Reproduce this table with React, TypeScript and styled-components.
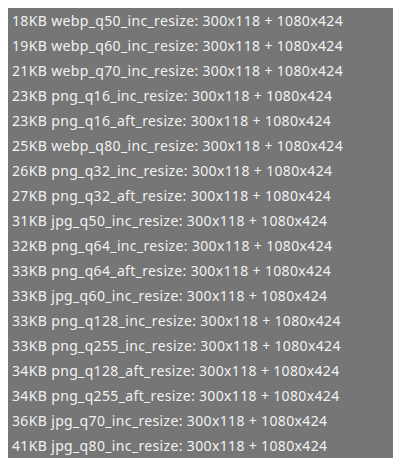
import React from 'react';
import styled, { createGlobalStyle } from 'styled-components';

const GlobalStyle = createGlobalStyle`
	body {
		margin: 8px;
		background: #ffffff;
	}
`;

const rows: string[] = [
	'18KB webp_q50_inc_resize',
	'19KB webp_q60_inc_resize',
	'21KB webp_q70_inc_resize',
	'23KB png_q16_inc_resize',
	'23KB png_q16_aft_resize',
	'25KB webp_q80_inc_resize',
	'26KB png_q32_inc_resize',
	'27KB png_q32_aft_resize',
	'31KB jpg_q50_inc_resize',
	'32KB png_q64_inc_resize',
	'33KB png_q64_aft_resize',
	'33KB jpg_q60_inc_resize',
	'33KB png_q128_inc_resize',
	'33KB png_q255_inc_resize',
	'34KB png_q128_aft_resize',
	'34KB png_q255_aft_resize',
	'36KB jpg_q70_inc_resize',
	'41KB jpg_q80_inc_resize',
];

const App = () => {
	return (
		<>
			<GlobalStyle />
			<List>
				{rows.map((name) => (
					<Row key={name}>{name}: 300x118 + 1080x424</Row>
				))}
			</List>
		</>
	);
};

export default App;

const List = styled.div`
	width: 385px;
	background: #767676;
	display: flex;
	flex-direction: column;
`;

const Row = styled.div`
	height: 25px;
	line-height: 25px;
	padding-left: 4px;
	font-family: 'Noto Sans', 'Open Sans', sans-serif;
	font-size: 14px;
	letter-spacing: 0.35px;
	color: #f2f2f2;
	white-space: nowrap;
`;
